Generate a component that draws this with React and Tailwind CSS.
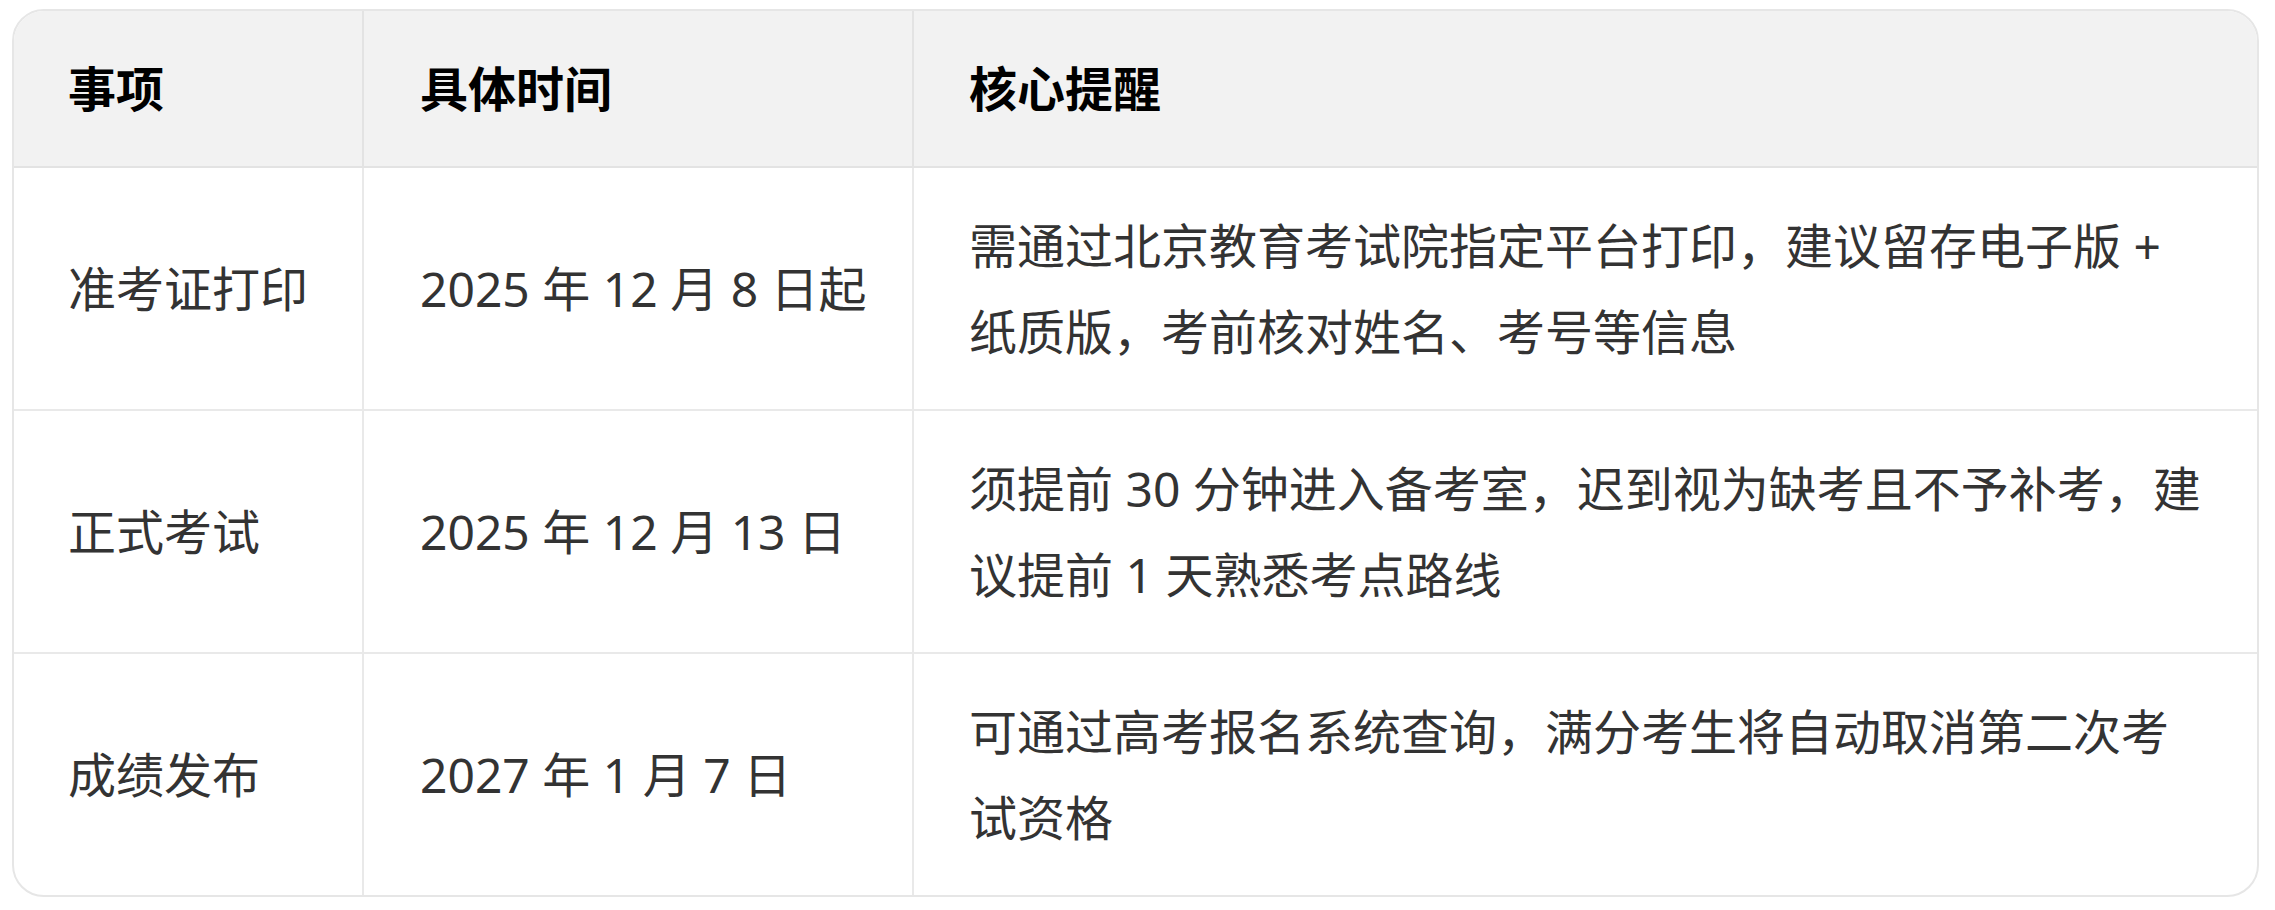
import React from 'react';

const rows = [
  {
    item: '准考证打印',
    time: '2025 年 12 月 8 日起',
    note: '需通过北京教育考试院指定平台打印，建议留存电子版 + 纸质版，考前核对姓名、考号等信息',
  },
  {
    item: '正式考试',
    time: '2025 年 12 月 13 日',
    note: '须提前 30 分钟进入备考室，迟到视为缺考且不予补考，建议提前 1 天熟悉考点路线',
  },
  {
    item: '成绩发布',
    time: '2027 年 1 月 7 日',
    note: '可通过高考报名系统查询，满分考生将自动取消第二次考试资格',
  },
];

export default function App() {
  return (
    <div
      className="bg-white pl-[12px] pt-[9px] pb-[13px] pr-[16px]"
      style={{ fontFamily: '"Noto Sans", "Noto Sans CJK SC", sans-serif' }}
    >
      <div className="w-[2247px] border-2 border-[#e6e6e6] rounded-[32px] overflow-hidden">
        <table className="w-full border-collapse table-fixed text-[48px] leading-[86px]">
          <colgroup>
            <col className="w-[349px]" />
            <col className="w-[550px]" />
            <col className="w-[1344px]" />
          </colgroup>
          <thead>
            <tr className="bg-[#f2f2f2] text-black font-bold">
              <th className="text-left font-bold pl-[54px] pr-[40px] pt-[35px] pb-[34px] border-r-2 border-b-2 border-[#e3e3e3]">事项</th>
              <th className="text-left font-bold pl-[56px] pr-[40px] pt-[35px] pb-[34px] border-r-2 border-b-2 border-[#e3e3e3]">具体时间</th>
              <th className="text-left font-bold pl-[55px] pr-[49px] pt-[35px] pb-[34px] border-b-2 border-[#e3e3e3]">核心提醒</th>
            </tr>
          </thead>
          <tbody className="text-[#333333]">
            {rows.map((r, i) => {
              const last = i === rows.length - 1;
              return (
                <tr key={r.item}>
                  <td className={`align-middle pl-[54px] pr-[20px] pt-[35px] pb-[34px] border-r-2 border-[#e9e9e9] ${last ? '' : 'border-b-2'}`}>
                    {r.item}
                  </td>
                  <td className={`align-middle pl-[56px] pr-[20px] pt-[35px] pb-[34px] border-r-2 border-[#e9e9e9] ${last ? '' : 'border-b-2'}`}>
                    {r.time}
                  </td>
                  <td className={`align-middle pl-[55px] pr-[49px] pt-[35px] pb-[34px] border-[#e9e9e9] ${last ? '' : 'border-b-2'}`}>
                    {r.note}
                  </td>
                </tr>
              );
            })}
          </tbody>
        </table>
      </div>
    </div>
  );
}
